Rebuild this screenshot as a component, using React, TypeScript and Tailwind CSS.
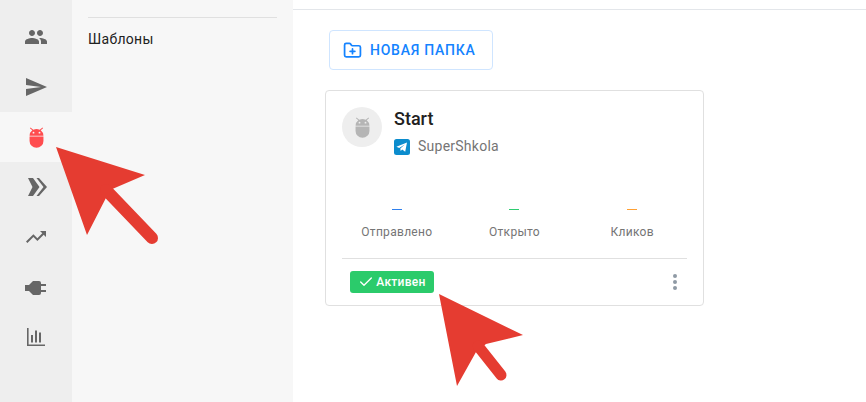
import { Check, FolderPlus } from "lucide-react";
import type { ReactNode } from "react";

const font = { fontFamily: '"Roboto", "Liberation Sans", sans-serif' };

function Android({ className }: { className: string }) {
  return (
    <svg viewBox="0 0 16 22" className={className} fill="currentColor">
      <path d="M1.6 0.2 4.6 2.7A7.6 7.6 0 0 1 11.4 2.7L14.4 0.2 15 1 12.5 3.3A7.4 7.4 0 0 1 15.4 9.2H0.6A7.4 7.4 0 0 1 3.5 3.3L1 1Z" />
      <path d="M0.6 10H15.4V14.6A7.4 7.4 0 0 1 0.6 14.6Z" />
      <circle cx="4.8" cy="5.8" r="1" fill="var(--eye)" />
      <circle cx="11.2" cy="5.8" r="1" fill="var(--eye)" />
    </svg>
  );
}

const Rail = ({ children, active }: { children: ReactNode; active?: boolean }) => (
  <div className={`h-[50px] flex items-center justify-center ${active ? "bg-[#f7f7f7]" : ""}`}>{children}</div>
);

const iconClass = "w-6 h-6 text-[#666666]";

const stats = [
  { label: "Отправлено", color: "bg-[#2f80ed]" },
  { label: "Открыто", color: "bg-[#2ecc71]" },
  { label: "Кликов", color: "bg-[#ffa033]" },
];

export default function App() {
  return (
    <div className="relative w-[866px] h-[402px] overflow-hidden bg-white flex" style={font}>
      {/* иконки слева */}
      <div className="w-[72px] bg-[#eeeeee] pt-[12px] shrink-0">
        <Rail>
          <svg viewBox="0 0 24 24" className={iconClass} fill="currentColor">
            <path d="M16 11c1.66 0 2.99-1.34 2.99-3S17.66 5 16 5c-1.66 0-3 1.34-3 3s1.34 3 3 3zm-8 0c1.66 0 2.99-1.34 2.99-3S9.66 5 8 5C6.34 5 5 6.34 5 8s1.34 3 3 3zm0 2c-2.33 0-7 1.17-7 3.5V19h14v-2.5c0-2.33-4.67-3.5-7-3.5zm8 0c-.29 0-.62.02-.97.05 1.16.84 1.97 1.97 1.97 3.45V19h6v-2.5c0-2.33-4.67-3.5-7-3.5z" />
          </svg>
        </Rail>
        <Rail>
          <svg viewBox="0 0 24 24" className={iconClass} fill="currentColor">
            <path d="M2.01 21 23 12 2.01 3 2 10l15 2-15 2z" />
          </svg>
        </Rail>
        <Rail active>
          <span className="text-[#ff4d4f] [--eye:#f7f7f7]">
            <Android className="w-[15px] h-[21px] block" />
          </span>
        </Rail>
        <Rail>
          <svg viewBox="0 0 24 24" className={iconClass} fill="currentColor">
            <path d="M4 3h5l6.5 9-6.5 9H4l4.5-9z" />
            <path d="M12.5 3H15l8 9-8 9h-2.5l7-9z" />
          </svg>
        </Rail>
        <Rail>
          <svg viewBox="0 0 24 24" className={iconClass} fill="currentColor">
            <path d="M16 6l2.29 2.29-4.88 4.88-4-4L2 16.59 3.41 18l6-6 4 4 6.3-6.29L22 12V6z" />
          </svg>
        </Rail>
        <Rail>
          <svg viewBox="0 0 24 24" className={iconClass} fill="currentColor">
            <path d="M1 10h4l4-4h6a2 2 0 0 1 2 2v1h5v2h-5v4h5v2h-5v1a2 2 0 0 1-2 2H9l-4-4H1z" />
          </svg>
        </Rail>
        <Rail>
          <svg viewBox="0 0 24 24" className={iconClass} fill="currentColor">
            <path d="M3 3h1.6v16.4H21V21H3z" />
            <path d="M7 10h2v7.5H7zM11 5.5h2v12h-2zM15 7.5h2v10h-2z" />
          </svg>
        </Rail>
      </div>

      {/* панель разделов */}
      <div className="w-[221px] bg-[#f7f7f7] px-[16px] pt-[17px] shrink-0">
        <div className="border-t border-[#e0e0e0] pt-[13px] text-[14px] leading-[17px] tracking-[0.3px] text-[#212121]">
          Шаблоны
        </div>
      </div>

      {/* основная часть */}
      <div className="flex-1 flex flex-col">
        <div className="h-[10px] border-b border-[#e3e6ea] shrink-0" />
        <button className="mt-[20px] ml-[36px] w-[164px] h-[40px] border border-[#cfe5ff] rounded-[4px] flex items-center pl-[13px] gap-[8px] text-[#1483ff] text-[14px] font-medium tracking-[0.75px]">
          <FolderPlus className="w-[19px] h-[19px]" strokeWidth={2.2} />
          <span>НОВАЯ ПАПКА</span>
        </button>
        <div className="mt-[20px] ml-[32px] w-[379px] h-[216px] border border-[#e0e0e0] rounded-[4px] px-[12px] flex flex-col">
          <div className="flex pl-[4px] pt-[16px] gap-[12px] h-[104px]">
            <div className="w-[40px] h-[40px] rounded-full bg-[#eeeeee] flex items-center justify-center text-[#b5b5b5] [--eye:#eeeeee]">
              <Android className="w-[15px] h-[21px] block" />
            </div>
            <div>
              <div className="text-[18px] leading-[24px] font-medium text-[#212121]">Start</div>
              <div className="mt-[5px] flex items-center gap-[8px] text-[14px] tracking-[0.25px] text-[#757575]">
                <svg viewBox="0 0 16 16" className="w-[16px] h-[16px]">
                  <rect width="16" height="16" rx="2.5" fill="#0b8ccd" />
                  <path d="M2.4 7.8 13 3.4 11.2 12.8 8.2 10.6 6.7 12.1 6.3 9.5 10.8 5.4 5.2 9z" fill="#ffffff" />
                </svg>
                SuperShkola
              </div>
            </div>
          </div>
          <div className="grid grid-cols-3">
            {stats.map((s) => (
              <div key={s.label} className="flex flex-col items-center">
                <div className={`w-[10px] h-[1px] mt-[14px] ${s.color}`} />
                <div className="mt-[14px] text-[12px] leading-[16px] tracking-[0.3px] text-[#757575]">{s.label}</div>
              </div>
            ))}
          </div>
          <div className="mx-[4px] mt-[18px] border-t border-[#e0e0e0]" />
          <div className="flex items-center justify-between pl-[12px] pr-[14px] mt-[12px]">
            <div className="w-[84px] h-[22px] rounded-[3px] bg-[#2bcb6b] text-white text-[12px] font-medium tracking-[0.3px] flex items-center justify-center gap-[2px]">
              <Check className="w-[16px] h-[16px]" strokeWidth={2} />
              Активен
            </div>
            <div className="flex flex-col gap-[2px]">
              <span className="w-[4px] h-[4px] rounded-full bg-[#8f9aa5]" />
              <span className="w-[4px] h-[4px] rounded-full bg-[#8f9aa5]" />
              <span className="w-[4px] h-[4px] rounded-full bg-[#8f9aa5]" />
            </div>
          </div>
        </div>
      </div>

      {/* красные стрелки поверх */}
      <svg className="absolute inset-0 w-[866px] h-[402px] pointer-events-none" viewBox="0 0 866 402">
        <path d="M56 147 145 175 110 190 87 235Z" fill="#e53c31" />
        <path d="M106 190 152 238" stroke="#e53c31" strokeWidth="12" strokeLinecap="round" />
        <path d="M439 294 523 335 486 344 476 352 457 386Z" fill="#e53c31" />
        <path d="M478 346 501 375" stroke="#e53c31" strokeWidth="11" strokeLinecap="round" />
      </svg>
    </div>
  );
}
